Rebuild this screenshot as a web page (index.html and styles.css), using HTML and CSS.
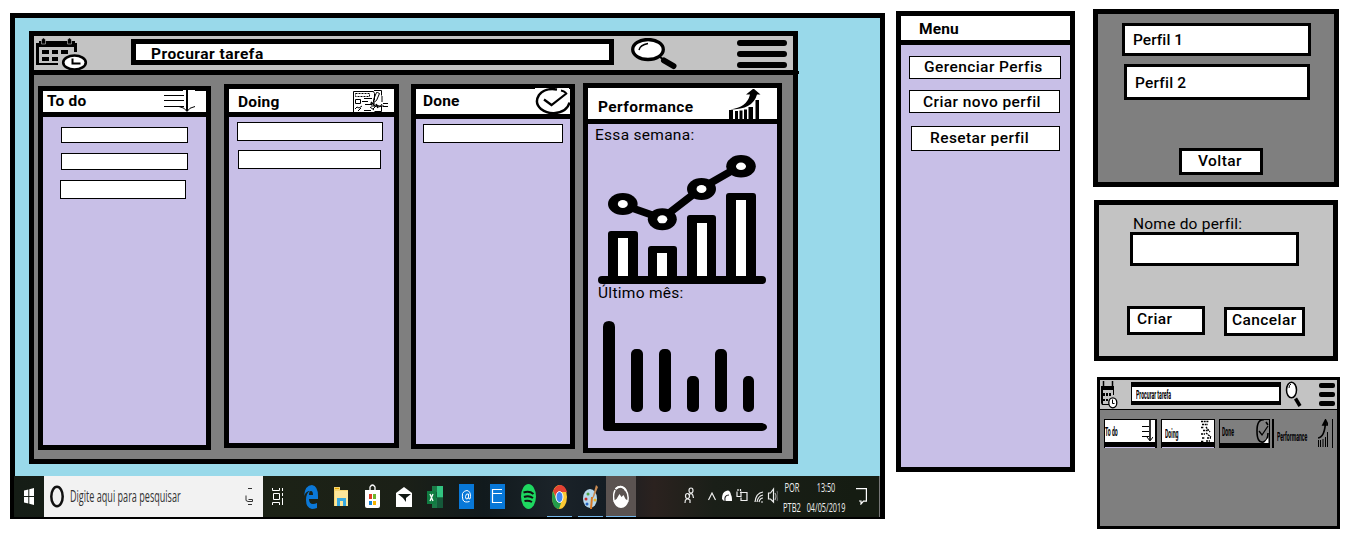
FILE: index.html
```html
<!DOCTYPE html>
<html lang="pt-BR">
<head>
<meta charset="utf-8">
<title>Quadro de tarefas</title>
<link rel="stylesheet" href="styles.css">
</head>
<body>
<main class="desktop">
  <section class="app">
    <header class="topbar">
      <svg class="logo" width="52" height="35" viewBox="36 37 52 35">
        <path d="M36 65V43h3v-2h36v2h2v9h-3v-5H39v16h19v2z"/>
        <path d="M41.500 44v-5h1v-1h2v1h1v5zM67.500 44v-5h1v-1h2v1h1v5z" stroke="#c3c3c3" stroke-width=".6"/>
        <path d="M42 50h7v4h-7zM52 50h6v4h-6zM61 50h7v4h-7zM42 57h7v4h-7zM52 57h6v4h-6z"/>
        <ellipse cx="74.500" cy="62.500" rx="11.300" ry="7" fill="#fff" stroke="#000" stroke-width="2.600"/>
        <path d="M72.500 58.500v5h8" fill="none" stroke="#000" stroke-width="2"/>
      </svg>
      <div class="search"><span class="t t-search">Procurar tarefa</span></div>
      <svg class="glass" width="47" height="32" viewBox="631 38 47 32">
        <ellipse cx="648" cy="49.500" rx="15.300" ry="10" fill="#fff" stroke="#000" stroke-width="3.300"/>
        <path d="M639 50q1-5 9-6.500" fill="none" stroke="#000" stroke-width="1.500"/>
        <path d="M660 57l4 3" stroke="#000" stroke-width="2"/>
        <path d="M664 60.500l9.500 5.500" stroke="#000" stroke-width="6" stroke-linecap="round"/>
      </svg>
      <div class="burger"><i></i><i></i><i></i></div>
    </header>
    <div class="board">
      <section class="col todo">
        <div class="head"><span class="t">To do</span>
          <svg width="34" height="22" viewBox="163 90 34 22"><path d="M183 90h12v2h-12z" fill="#fff"/><path d="M164 95.500h20M164 100.500h20M164 106.500h20" stroke="#000"/><path d="M187 90v21" stroke="#000" stroke-width="2"/><path d="M179 106.500q6 1 8 5q2-4 8-5" fill="none" stroke="#000"/></svg>
        </div>
        <div class="list"><p></p><p></p><p></p></div>
      </section>
      <section class="col doing">
        <div class="head"><span class="t">Doing</span>
          <svg width="36" height="23" viewBox="353 89 36 23" fill="none" stroke="#000"><path d="M360 89h21" stroke="#fff" stroke-width="2"/><path d="M353.500 112V91.500h20l1 2v7M374 90.500h7.500v5"/><path d="M355.500 93.500h14v3h-14z" stroke-dasharray="2 1"/><path d="M355.500 99.500h5v4h-5zM364 98.500h8M362 101.500h6M365 104.500h7M355 109l2-2 2 1 3-2M358 111l3-3M364 110.500h7M370 107l4 3"/><path d="M377.500 92.500h-1l-3 7v3l3-2 3-7zM382 96v6M375 103l-5 1M371 106h13M373 109l4-4 3 2 2-3M383 103.500h5M383 106.500h5M381.500 106v5.500h-7"/><path d="M371 102l4 4M376 104l2 4" stroke-width="1.600"/></svg>
        </div>
        <div class="list"><p></p><p></p></div>
      </section>
      <section class="col done">
        <div class="head"><span class="t">Done</span>
          <svg width="36" height="27" viewBox="535 88 36 27" fill="none" stroke="#000"><path d="M535 88h34v2h-34z" fill="#fff" stroke="none"/><path d="M557 89.500Q545 87.500 539 95q-5 8 2 14 6 4.500 13 4.200 13-1 15.500-10.700" stroke-width="2.400"/><path d="M561 90.500q3 .5 5 2.500" stroke-width="2"/><path d="M544 99.500l7.500 5.500 15.500-12" stroke-width="2.200"/></svg>
        </div>
        <div class="list"><p></p></div>
      </section>
      <section class="col perf">
        <div class="head"><span class="t">Performance</span>
          <svg width="32" height="31" viewBox="730 89 32 31"><path d="M730 110h4v10h-4zM736 111h3v9h-3zM740.500 110.500h3v9.500h-3zM745 109.500h3v10.500h-3zM749.500 107h4.500v13h-4.500zM756.500 100h3.500v20h-3.500z"/><path d="M731 109.500q17-2 20-15h-4l7.500-6 7 6h-3.500q-4 15-27 15z"/></svg>
        </div>
        <div class="list">
          <span class="t reg week">Essa semana:</span>
          <svg class="chart1" width="170" height="132" viewBox="597 153 170 132">
            <path d="M622 204.500l40 14 39-30 40-23" fill="none" stroke="#000" stroke-width="7.500"/>
            <g><ellipse cx="622.800" cy="204" rx="14.800" ry="11"/><ellipse cx="662.300" cy="219.300" rx="14.500" ry="11"/><ellipse cx="701.500" cy="189" rx="14.500" ry="11"/><ellipse cx="741" cy="166.300" rx="14.800" ry="11.200"/></g>
            <g fill="#fff"><ellipse cx="622.800" cy="204" rx="5" ry="4"/><ellipse cx="662.300" cy="219.300" rx="5" ry="4"/><ellipse cx="701.500" cy="189" rx="5" ry="4"/><ellipse cx="741" cy="166.300" rx="5" ry="3.700"/></g>
            <path d="M608 278v-44q0-3 3-3h24q3 0 3 3v44zM648 278v-29q0-3 3-3h23q3 0 3 3v29zM687 278v-60q0-3 3-3h23q3 0 3 3v60zM726 278v-82q0-3 3-3h24q3 0 3 3v82z"/>
            <path d="M618 238h10v38h-10zM657 253h10v23h-10zM697 223h10v53h-10zM736 200h10v76h-10z" fill="#fff"/>
            <rect x="598" y="276" width="168" height="8" rx="4"/>
          </svg>
          <span class="t reg month">Último mês:</span>
          <svg class="chart2" width="166" height="112" viewBox="602 320 166 112">
            <path d="M603 327q0-6 6-6t6 6v96h147q5 1 5 4t-5 4H606q-3 0-3-3z"/>
            <rect x="631" y="349" width="12" height="63" rx="5"/><rect x="659" y="349" width="12" height="63" rx="5"/><rect x="687" y="376" width="12" height="36" rx="5"/><rect x="715" y="349" width="12" height="63" rx="5"/><rect x="743" y="376" width="11" height="36" rx="5"/>
          </svg>
        </div>
      </section>
    </div>
  </section>
  <footer class="taskbar">
    <div class="start"><svg width="10" height="17" viewBox="0 0 10 17" fill="#fff"><path d="M0 2.500L4.300 1.500V8H0zM5.300 1.200L10 0v8H5.300zM0 9h4.300v6.500L0 14.500zM5.300 9H10v8l-4.700-1.200z"/></svg></div>
    <div class="cortana">
      <svg width="14" height="23" viewBox="0 0 14 23"><ellipse cx="7" cy="11.500" rx="5.700" ry="9.700" fill="none" stroke="#111" stroke-width="2.500"/></svg>
      <span>Digite aqui para pesquisar</span>
      <svg class="mic" width="9" height="18" viewBox="0 0 9 18" fill="none" stroke="#333"><path d="M3 .500h4M1 7.500v5l2 1h4.500M3.500 11.500h4v2M3 16.500h4"/></svg>
    </div>
    <div class="cell view"><svg width="12" height="17" viewBox="0 0 12 17" fill="none" stroke="#fff"><path d="M.500 0v2.500h7V0M1.500 5.500h6v6h-6zM.500 17v-2.500h7V17M10.500 0v3M10.500 5v3M10.500 10v7"/></svg></div>
    <div class="cell"><svg width="14" height="24" viewBox="0 0 14 24"><path d="M0 11Q1 0 8 0q6 1 6 11v3H5q0 5 4 5 2 0 4-1v5q-3 1-5 1-6-1-6-9 0-7 4-9-4 0-6 5zM5 10h4q0-4-2-4t-2 4z" fill="#0b78d7"/></svg></div>
    <div class="cell"><svg width="15" height="20" viewBox="0 0 15 20"><path d="M0 0h6v3h8v16H0z" fill="#f6d571"/><path d="M1 4h13v15H1z" fill="#fbe69b"/><path d="M3 19v-8h9v8H9v-5H6v5z" fill="#37a9e0"/><path d="M1 1h4v1H1z" fill="#e8a800"/></svg></div>
    <div class="cell"><svg width="15" height="25" viewBox="0 0 15 25"><path d="M5 8V3q2.500-4 5 0v5" fill="none" stroke="#fff" stroke-width="1.300"/><path d="M0 6h15v16q0 2-2 2H2q-2 0-2-2z" fill="#fff"/><path d="M4 10h3v5H4z" fill="#e23c24"/><path d="M8 10h3v5H8z" fill="#6cb52d"/><path d="M4 17h3v4H4z" fill="#1384d8"/><path d="M8 17h3v4H8z" fill="#f5b400"/></svg></div>
    <div class="cell"><svg width="16" height="20" viewBox="0 0 16 20"><path d="M0 6l8-6 8 6v14H0z" fill="#fff"/><path d="M2 7h13l-5 4v4l-3-4z" fill="#111814"/></svg></div>
    <div class="cell"><svg width="16" height="22" viewBox="0 0 16 22"><path d="M5 0h11v22H5z" fill="#1b7b48"/><path d="M10 0h6v11h-6z" fill="#32c481"/><path d="M5 6h5v6H5zM10 12h6v10h-6z" fill="#15593a"/><path d="M0 5h9v13H0z" fill="#107c41"/><path d="M3 8l3 7M6 8l-3 7" stroke="#fff" stroke-width="1.300"/></svg></div>
    <div class="cell"><svg width="15" height="25" viewBox="0 0 15 25"><path d="M0 0h15v25H0z" fill="#0878d8"/><path d="M10.500 17.500q-5 1.500-6.500-1.500-1-3-.5-6.500Q5 6.500 8 6.500q3.500.5 3.500 6 0 3-1.500 2.500-.8-.3-.5-5-2.500-1-3 2.500 0 3 1.500 2.500 1.500-.5 1.500-2.500" fill="none" stroke="#fff"/></svg></div>
    <div class="cell"><svg width="15" height="25" viewBox="0 0 15 25"><path d="M0 0h15v25H0z" fill="#0878d8"/><path d="M12 5.500H2.500v13H12M3 9.500h9" fill="none" stroke="#fff" stroke-width="1.200"/></svg></div>
    <div class="cell"><svg width="15" height="25" viewBox="0 0 15 25"><ellipse cx="7.500" cy="12.500" rx="7.500" ry="12.500" fill="#1ed760"/><path d="M2.500 8.500q6-2 10 1.500M3 13q5-2 9 1M3.500 17q4-1 7.500 1" fill="none" stroke="#111" stroke-width="2"/></svg></div>
    <div class="cell run"><svg width="15" height="24" viewBox="0 0 15 24"><ellipse cx="7.500" cy="12" rx="7.500" ry="12" fill="#fcc934"/><path d="M1 6Q4 0 8 0q5 0 7 7H7L5 14z" fill="#e34133"/><path d="M1 6l4 10 4 2-2 6Q0 23 0 12 0 8 1 6z" fill="#249c4b"/><ellipse cx="7.500" cy="12" rx="3.500" ry="5.500" fill="#4285f4" stroke="#fff"/></svg></div>
    <div class="cell run"><svg width="15" height="24" viewBox="0 0 15 24"><ellipse cx="7" cy="13.500" rx="7" ry="9.500" fill="#b8d9ec"/><path d="M13 0l2 2-4 10-2 2z" fill="#c88a52"/><path d="M9 12l-1 12" stroke="#d87723" stroke-width="2"/><circle cx="3" cy="14" r="1.500" fill="#c62c2c"/><circle cx="5" cy="9" r="1.500" fill="#4ea546"/><circle cx="4" cy="19" r="1.500" fill="#2462bd"/><circle cx="12" cy="15" r="1.500" fill="#e8b42c"/></svg></div>
    <div class="cell run active"><svg width="16" height="24" viewBox="0 0 16 24"><path d="M2.500 4Q8-1 12.500 4.500q4 6 2 12.500M2 5q-3 7 0 13" fill="none" stroke="#fff" stroke-width="1.500"/><path d="M2.500 4Q6 1 9 2q3 1 4 4" fill="none" stroke="#fff" stroke-width="2"/><path d="M.500 16l3-2 3-5 2 3 2-2 2 4 3 2q-2 7-7.500 7T.500 16z" fill="#fff"/></svg></div>
    <div class="tray">
      <svg width="94" height="20" viewBox="684 487 94 20" fill="none" stroke="#eee" stroke-width="1.200"><ellipse cx="691" cy="490.500" rx="2" ry="2.500"/><ellipse cx="687.500" cy="496" rx="2" ry="2.500"/><path d="M688.500 495q4-4 5 3M685 503q0-6 5-3v3M708.500 500l3.500-7 3.500 7"/><path d="M722 499q0-7 4-8 4-2 5 4 1 1 1 6h-8z" fill="#fff" stroke="none"/><path d="M725 501q-1-6 4-6" stroke="#222"/><path d="M740 492.500h7v8h-6v-3M737 491.500v5h4v-5M738 489v2M740.500 489v2"/><path d="M755 502q1-9 8-10M757 502q1-6 6-7M759 502q1-4 4-4M761 502h2"/><path d="M768.500 493v6h2l3 3v-13l-3 4z"/><path d="M775 493q2 3 0 7" stroke="#aaa"/><path d="M777 491q2 5 0 10" stroke="#666"/></svg>
      <div class="lang"><span>POR</span><span>PTB2</span></div>
      <div class="clock"><span>13:50</span><span>04/05/2019</span></div>
      <svg class="note" width="11" height="17" viewBox="0 0 11 17" fill="none" stroke="#fff" stroke-width="1.200"><path d="M0 .600h10.400v12.500H7.500L5 16v-3H3"/></svg>
    </div>
  </footer>
</main>

<aside class="menu">
  <div class="head"><span class="t">Menu</span></div>
  <nav>
    <a class="b1"><span class="t">Gerenciar Perfis</span></a>
    <a class="b2"><span class="t">Criar novo perfil</span></a>
    <a class="b3"><span class="t">Resetar perfil</span></a>
  </nav>
</aside>

<div class="side">
  <section class="profiles">
    <div class="box p1"><span class="t">Perfil 1</span></div>
    <div class="box p2"><span class="t">Perfil 2</span></div>
    <div class="box back"><span class="t">Voltar</span></div>
  </section>
  <section class="create">
    <span class="t reg name">Nome do perfil:</span>
    <div class="box field"></div>
    <div class="actions">
      <div class="box ok"><span class="t">Criar</span></div>
      <div class="box cancel"><span class="t">Cancelar</span></div>
    </div>
  </section>
  <section class="mini">
    <header>
      <svg width="18" height="29" viewBox="1100 380 18 29"><path d="M1101 386h13v9h-1v-5h-10v14h6v1h-7l-1-2z"/><path d="M1103.500 381v6M1112.500 381v6M1102 387h12" stroke="#000" stroke-width="1.500"/><path d="M1103 393h2v3h-2zM1106 393h2v3h-2zM1109 393h2v3h-2zM1103 399h2v2h-2zM1106 399h2v2h-2z"/><ellipse cx="1112.800" cy="402.800" rx="4" ry="5" fill="#fff" stroke="#000" stroke-width="1.300"/><path d="M1112.500 399.500v4h2" fill="none" stroke="#000"/></svg>
      <div class="msearch"><span class="m">Procurar tarefa</span></div>
      <svg class="mglass" width="17" height="28" viewBox="1285 381 17 28"><ellipse cx="1291.500" cy="390" rx="5" ry="7.800" fill="#fff" stroke="#000" stroke-width="1.500"/><path d="M1289 388q0-3 2-4" fill="none" stroke="#000"/><path d="M1295.500 398.500l4.500 7.500" stroke="#000" stroke-width="3.500"/></svg>
      <div class="mburger"><i></i><i></i><i></i></div>
    </header>
    <div class="mrow">
      <div class="mc m1"><span class="m">To do</span><svg width="12" height="22" viewBox="0 0 12 22" fill="none" stroke="#000"><path d="M1 6.500h7M1 11.500h7M1 16.500h7M6 17l3 4 3-4"/><path d="M9 0v20" stroke-width="1.600"/></svg></div>
      <div class="mc m2"><span class="m">Doing</span><svg width="12" height="23" viewBox="0 0 12 23" fill="none" stroke="#000"><path d="M1 1.500h8M2 4.500h6M1 7.500h3M6 7l4 5M3 10.500h5M1 14h4M6 13l5 4M2 18h3M7 18h4M1 21.500h3M6 21h4" stroke-dasharray="2 .7" stroke-width="1.300"/></svg></div>
      <div class="mc m3"><span class="m">Done</span><svg width="13" height="24" viewBox="0 0 13 24" fill="none" stroke="#000"><path d="M8 .800Q1 0 1 12t6 11q5-1 5-9M10 3l2 3" stroke-width="1.600"/><path d="M3 12l3 4 6-9" stroke-width="1.300"/><path d="M8 24l4-5v5z" fill="#fff" stroke="none"/></svg></div>
      <div class="mc m4"><span class="m">Performance</span><svg width="10" height="28" viewBox="0 0 10 28" fill="none" stroke="#000"><path d="M.500 21v7M2.500 21v7M5 20v8M7.500 18v10M9.500 13v15"/><path d="M0 19q7-1 7.500-17M5 6l2.500-5L10 6z" stroke-width="1.700"/></svg></div>
    </div>
  </section>
</div>
</body>
</html>
```

FILE: styles.css
```css
* { box-sizing: border-box; }
body { margin: 0; width: 1365px; height: 542px; overflow: hidden; background: #fff; display: flex; align-items: flex-start; color: #000; font-family: Roboto, "Liberation Sans", sans-serif; }
svg { display: block; flex: none; }
p, a { display: block; margin: 0; }

.t { display: block; font-size: 15.5px; line-height: 20px; height: 20px; font-weight: 500; letter-spacing: .42px; white-space: nowrap; }
.t.reg { font-weight: 400; letter-spacing: .28px; }

/* desktop window */
.desktop { flex: none; width: 875px; height: 506px; margin: 13px 0 0 10px; border: 5px solid #000; border-bottom-width: 2px; background: #99d9ea; display: flex; flex-direction: column; justify-content: space-between; }
.app { width: 769px; height: 433px; margin: 13px 0 0 14px; border: 5px solid #000; background: #7f7f7f; }
.topbar { position: relative; height: 39px; border-bottom: 5px solid #000; background: #c3c3c3; display: flex; align-items: flex-start; }
.topbar::after { content: ""; position: absolute; right: -6px; bottom: -4px; width: 2px; height: 3px; background: #000; }
.logo { margin: 1px 0 0 2px; }
.search { width: 483px; height: 26px; margin: 3px 0 0 43px; border: 5px solid #000; background: #fff; padding-left: 15px; }
.search .t { font-weight: 700; letter-spacing: .48px; }
.glass { margin: 2px 0 0 17px; }
.burger { margin: 4px 0 0 59px; width: 50px; display: flex; flex-direction: column; gap: 5px; }
.burger i { height: 6px; border-radius: 3px; background: #000; }

/* board columns */
.board { display: flex; align-items: flex-start; padding-left: 4px; }
.col { border: 5px solid #000; background: #c8bfe7; }
.col .head { display: flex; justify-content: space-between; align-items: flex-start; background: #fff; border-bottom: 5px solid #000; }
.col .head .t { font-weight: 700; }
.col p { background: #fff; border: 1px solid #000; }
.todo { width: 173px; height: 364px; margin-top: 11px; }
.todo .head { height: 26px; padding: 0 9px 0 4px; }
.todo .head .t { letter-spacing: .2px; }
.todo .head svg { margin-top: -1px; }
.todo .list { padding: 10px 0 0 18px; }
.todo p { width: 127px; height: 16px; margin-bottom: 10px; }
.todo p:nth-child(2) { height: 17px; }
.todo p:nth-child(3) { width: 126px; height: 19px; margin-left: -1px; }
.doing { width: 175px; height: 364px; margin: 9px 0 0 13px; }
.doing .head { height: 28px; padding: 0 5px 0 9px; }
.doing .head .t { margin-top: 3px; letter-spacing: .2px; }
.doing .list { padding: 5px 0 0 8px; }
.doing p { width: 146px; height: 19px; margin-bottom: 9px; }
.doing p:nth-child(2) { width: 143px; margin-left: 1px; }
.done { width: 164px; height: 365px; margin: 9px 0 0 12px; }
.done .head { height: 30px; padding: 0 0 0 7px; }
.done .head .t { margin-top: 2px; letter-spacing: .2px; }
.done .head svg { margin-top: -1px; margin-right: -1px; }
.done .list { padding: 5px 0 0 7px; }
.done p { width: 140px; height: 19px; }
.perf { width: 199px; height: 370px; margin: 8px 0 0 8px; }
.perf .head { height: 36px; padding: 0 16px 0 10px; }
.perf .head .t { margin-top: 9px; }
.perf .head svg { margin-top: 1px; }
.week { margin: 1px 0 0 7px; }
.chart1 { margin: 8px 0 0 9px; }
.month { margin: -2px 0 0 10px; }
.chart2 { margin: 17px 0 0 14px; }

/* taskbar */
.taskbar { height: 41px; margin-left: -1px; display: flex; background: linear-gradient(90deg, #151d16 0, #1c2216 270px, #1b2017 390px, #111a1d 470px, #1b2329 540px, #151d24 590px, #2b221f 640px, #1a1f18 700px, #151c12 840px); }
.start { width: 30px; padding: 12px 0 0 10px; }
.cortana { width: 219px; background: #f2f2f2; display: flex; padding-left: 6px; }
.cortana > svg { margin-top: 9px; }
.cortana span { width: 190px; flex: none; margin: 8px -45px 0 6px; font: 15.5px/24px "Open Sans", sans-serif; color: #333; white-space: nowrap; transform: scaleX(.585); transform-origin: 0 0; }
.cortana .mic { margin: 12px 0 0 30px; }
.cell { width: 31.100px; height: 41px; flex: none; display: flex; align-items: center; justify-content: center; position: relative; }
.view { width: 32px; padding-right: 2px; }
.run::after { content: ""; position: absolute; bottom: 0; left: 3px; width: 25px; height: 1px; background: #76b9ed; }
.active { width: 30px; background: #5b5351; }
.active::after { left: 0; width: 30px; }
.tray { display: flex; align-items: flex-start; margin-left: 48px; flex: 1; border-right: 1px solid #777; }
.tray > svg { margin-top: 11px; }
.lang, .clock { display: flex; flex-direction: column; align-items: center; font: 13px/20px "Open Sans", sans-serif; color: #eee; height: 40px; margin-top: 1px; }
.lang { width: 40px; margin-left: -6px; transform: scaleX(.58); }
.clock { width: 80px; margin-left: -26px; transform: scaleX(.56); }
.tray .note { margin: 12px 0 0 -10px; }

/* menu window */
.menu { flex: none; width: 179px; height: 461px; margin: 11px 0 0 11px; border: 5px solid #000; background: #c8bfe7; }
.menu .head { height: 29px; border-bottom: 5px solid #000; background: #fff; padding: 3px 0 0 18px; }
.menu .head .t { font-weight: 700; letter-spacing: .1px; }
.menu nav { padding: 11px 0 0 8px; }
.menu a { border: 1px solid #000; background: #fff; }
.b1 { width: 152px; height: 23px; padding-left: 14px; }
.menu .b2 { width: 151px; height: 23px; margin-top: 11px; padding: 1px 0 0 13px; }
.menu .b3 { width: 149px; height: 25px; margin: 13px 0 0 2px; padding: 1px 0 0 18px; }

/* profile windows */
.side { flex: none; margin: 9px 0 0 18px; display: flex; flex-direction: column; }
.box { background: #fff; border: 3px solid #000; }
.profiles { width: 246px; height: 178px; border: 5px solid #000; background: #7f7f7f; padding: 9px 0 0 24px; }
.profiles .p1 .t { letter-spacing: .05px; }
.profiles .p2 .t { letter-spacing: .2px; }
.p1 { width: 189px; height: 33px; padding: 4px 0 0 8px; }
.p2 { width: 186px; height: 36px; margin: 8px 0 0 2px; padding: 6px 0 0 8px; }
.back { width: 84px; height: 27px; margin: 48px 0 0 57px; padding-left: 16px; }
.create { width: 244px; height: 161px; margin: 13px 0 0 1px; border: 5px solid #000; background: #c3c3c3; padding: 9px 0 0 28px; }
.create .name { margin-left: 6px; letter-spacing: .22px; }
.field { width: 169px; height: 34px; margin: -2px 0 0 3px; }
.actions { display: flex; align-items: flex-start; gap: 19px; margin-top: 40px; }
.ok { width: 78px; height: 29px; padding-left: 7px; }
.cancel { width: 81px; height: 29px; margin-top: 1px; padding-left: 5px; }

/* reduced view */
.mini { width: 243px; height: 152px; margin: 16px 0 0 4px; border: 3px solid #000; background: #7f7f7f; }
.mini header { height: 30px; background: #c3c3c3; border-bottom: 1px solid #000; display: flex; align-items: flex-start; }
.m { display: block; white-space: nowrap; font-size: 12px; line-height: 14px; height: 14px; font-weight: 700; transform: scaleX(.43); transform-origin: 0 0; }
.msearch { width: 150px; height: 23px; margin: 2px 0 0 13px; border: solid #000; border-width: 5px 2px 4px 1px; background: #fff; padding: 1px 0 0 4px; }
.mglass { margin: 1px 0 0 4px; }
.mburger { width: 16px; margin: 3px 0 0 17px; display: flex; flex-direction: column; gap: 4px; }
.mburger i { height: 5px; border-radius: 2px; background: #000; }
.mrow { display: flex; padding: 9px 0 0 4px; }
.mc { height: 29px; display: flex; justify-content: space-between; border: 1px solid #000; }
.mc .m { width: 20px; }
.mc svg { margin-right: 2px; }
.m1, .m2 { background: #fff; border-bottom: 0; box-shadow: inset 0 -1px #c8bfe7, inset 0 -6px #000; }
.m1 { width: 53px; border-right-width: 2px; }
.m1 .m { margin-top: 5px; }
.m2 { width: 54px; margin-left: 4px; }
.m2 .m { margin: 7px 0 0 3px; }
.m3 { width: 51px; margin-left: 4px; border-bottom-width: 5px; }
.m3 svg { margin-right: 0; margin-top: -1px; }
.m3 .m { margin: 5px 0 0 2px; }
.m4 { width: 61px; margin-left: 2px; border-width: 0 1px 0 2px; }
.m4 .m { margin: 11px 0 0 3px; }
.m4 svg { margin-right: 4px; }
```
